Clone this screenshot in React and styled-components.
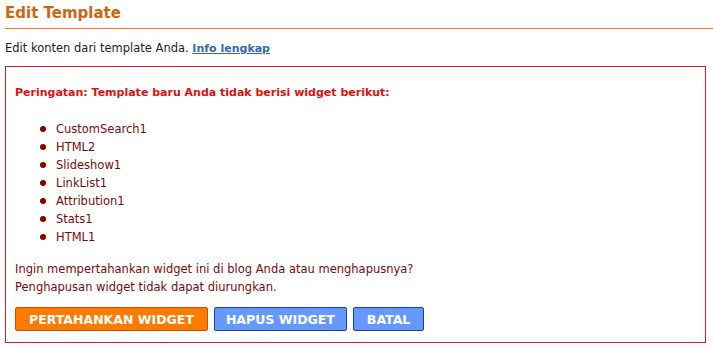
import React from "react";
import styled, { createGlobalStyle } from "styled-components";

const GlobalStyle = createGlobalStyle`
  html, body {
    margin: 0;
    padding: 0;
    background: #fff;
  }
  body {
    font-family: "DejaVu Sans", Verdana, sans-serif;
    font-size: 11.5px;
  }
`;

const widgets = [
  "CustomSearch1",
  "HTML2",
  "Slideshow1",
  "LinkList1",
  "Attribution1",
  "Stats1",
  "HTML1",
];

function App() {
  return (
    <Page>
      <GlobalStyle />
      <Title>Edit Template</Title>
      <Intro>
        Edit konten dari template Anda. <MoreLink href="#">Info lengkap</MoreLink>
      </Intro>

      <WarningBox>
        <WarningTitle>Peringatan: Template baru Anda tidak berisi widget berikut:</WarningTitle>
        <WidgetList>
          {widgets.map((w) => (
            <li key={w}>{w}</li>
          ))}
        </WidgetList>
        <Question>
          Ingin mempertahankan widget ini di blog Anda atau menghapusnya?
          <br />
          Penghapusan widget tidak dapat diurungkan.
        </Question>
        <ButtonRow>
          <ActionBtn $primary>Pertahankan Widget</ActionBtn>
          <ActionBtn $pad={11}>Hapus Widget</ActionBtn>
          <ActionBtn>Batal</ActionBtn>
        </ButtonRow>
      </WarningBox>
    </Page>
  );
}

const Page = styled.div`
  padding: 0 7px 0 5px;
`;

const Title = styled.h2`
  margin: 0 -7px 0 0;
  padding: 4px 0 6px;
  font-size: 15px;
  line-height: 18px;
  font-weight: bold;
  color: #cc6611;
  border-bottom: 1px solid #e07a2a;
`;

const Intro = styled.p`
  margin: 0;
  padding: 11px 0 0;
  line-height: 16px;
  color: #222;
`;

const MoreLink = styled.a`
  color: #3366bb;
  font-size: 11px;
  font-weight: bold;
  text-decoration: underline;
`;

const WarningBox = styled.div`
  margin-top: 9px;
  border: 1px solid #cc2222;
  padding: 18px 9px 11px;
  color: #7a0a0a;
`;

const WarningTitle = styled.p`
  margin: 0;
  font-size: 11px;
  line-height: 16px;
  font-weight: bold;
  color: #dd1111;
`;

const WidgetList = styled.ul`
  margin: 19px 0 0;
  padding-left: 41px;
  list-style: none;

  li {
    position: relative;
    line-height: 18px;
  }

  li::before {
    content: "";
    position: absolute;
    left: -16px;
    top: 6px;
    width: 6px;
    height: 6px;
    border-radius: 50%;
    background: #880000;
  }
`;

const Question = styled.p`
  margin: 14px 0 0;
  line-height: 18px;
`;

const ButtonRow = styled.div`
  display: flex;
  gap: 6px;
  margin-top: 11px;
`;

const ActionBtn = styled.button`
  height: 24px;
  padding: 0 ${(p) => p.$pad ?? 13}px;
  border: 1px solid ${(p) => (p.$primary ? "#c25400" : "#1e3f99")};
  border-radius: 2px;
  background: ${(p) => (p.$primary ? "#ff7a00" : "#6699ff")};
  color: #fff;
  font-family: "DejaVu Sans", Verdana, sans-serif;
  font-size: 12.5px;
  font-weight: bold;
  text-transform: uppercase;
  cursor: pointer;
`;

export default App;
